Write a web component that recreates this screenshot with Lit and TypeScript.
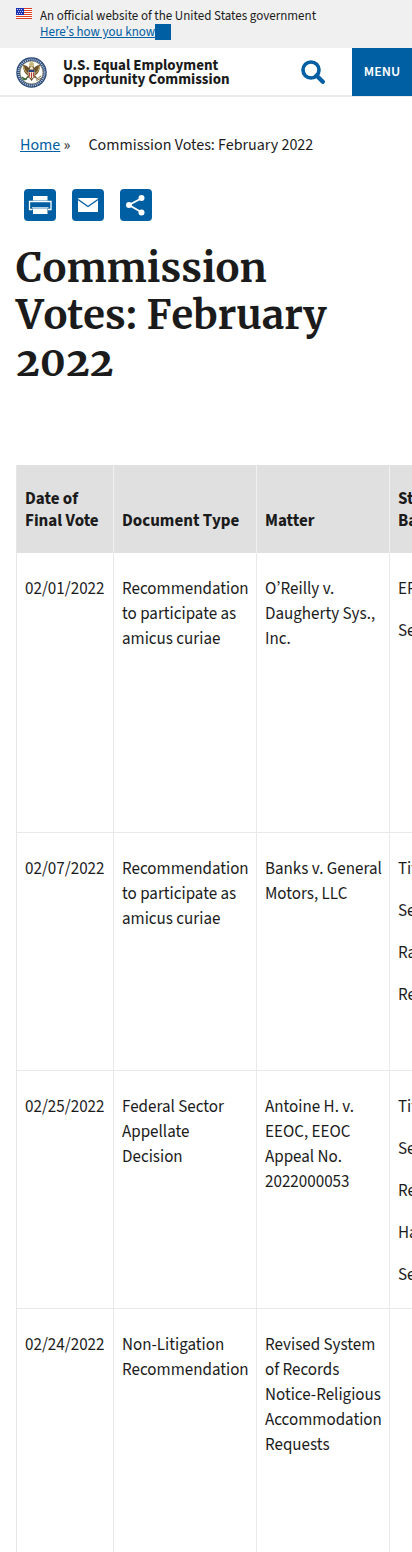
import { LitElement, html, css, svg } from "lit";
import { customElement } from "lit/decorators.js";

interface Vote {
  date: string;
  type: string;
  matter: string;
  bases: string[];
  size: string;
}

const votes: Vote[] = [
  {
    date: "02/01/2022",
    type: "Recommendation to participate as amicus curiae",
    matter: "O’Reilly v. Daugherty Sys., Inc.",
    bases: ["EPA", "Sex"],
    size: "tall",
  },
  {
    date: "02/07/2022",
    type: "Recommendation to participate as amicus curiae",
    matter: "Banks v. General Motors, LLC",
    bases: ["Title VII", "Sex", "Race", "Retaliation"],
    size: "medium",
  },
  {
    date: "02/25/2022",
    type: "Federal Sector Appellate Decision",
    matter: "Antoine H. v. EEOC, EEOC Appeal No. 2022000053",
    bases: ["Title VII", "Sex", "Retaliation", "Harassment", "Section 501"],
    size: "medium",
  },
  {
    date: "02/24/2022",
    type: "Non-Litigation Recommendation",
    matter: "Revised System of Records Notice-Religious Accommodation Requests",
    bases: [],
    size: "last",
  },
];

@customElement("site-banner")
export class SiteBanner extends LitElement {
  static styles = css`
    :host {
      display: block;
      background: #f0f0f0;
    }
    .banner {
      display: flex;
      gap: 8px;
      padding: 8px 16px;
      font-size: 13px;
      line-height: 16px;
    }
    .flag {
      flex: none;
      width: 16px;
      height: 11px;
    }
    .text {
      margin: 0;
    }
    .know {
      display: flex;
      align-items: center;
      padding: 0;
      border: 0;
      background: none;
      color: #005ea2;
      font: inherit;
      text-decoration: underline;
    }
    .marker {
      width: 16px;
      height: 16px;
      background: #005ea2;
    }
  `;

  render() {
    return html`
      <section class="banner" aria-label="Official website">
        <svg class="flag" viewBox="0 0 16 11" aria-hidden="true">
          <rect width="16" height="11" fill="#fff" />
          ${[0, 2, 4, 6, 8, 10].map(
            (y) => svg`<rect y=${y} width="16" height="1" fill="#db3e1f" />`,
          )}
          <rect width="8" height="7" fill="#1e33b1" />
          ${[1, 3, 5].map((y) =>
            [1, 3, 5].map(
              (x) =>
                svg`<rect x=${x + (y === 3 ? 1 : 0)} y=${y} width="1" height="1" fill="#c5cbf0" />`,
            ),
          )}
        </svg>
        <div>
          <p class="text">An official website of the United States government</p>
          <button class="know" type="button">Here’s how you know<span class="marker"></span></button>
        </div>
      </section>
    `;
  }
}

@customElement("site-header")
export class SiteHeader extends LitElement {
  static styles = css`
    :host {
      display: block;
    }
    .bar {
      display: flex;
      align-items: stretch;
      box-sizing: border-box;
      height: 49px;
      padding-left: 16px;
      box-shadow: inset 0 -2px 0 #ebebeb;
    }
    .brand {
      display: flex;
      flex: 1;
      align-items: center;
      gap: 16px;
      color: #1b1b1b;
      font-size: 15px;
      font-weight: 700;
      line-height: 14px;
      text-decoration: none;
    }
    .seal {
      flex: none;
      width: 31px;
      height: 31px;
    }
    .search,
    .menu {
      display: grid;
      place-items: center;
      height: 48px;
      padding: 0;
      border: 0;
      font: inherit;
    }
    .search {
      width: 78px;
      background: none;
      color: #005ea2;
    }
    .glass {
      width: 24px;
      height: 24px;
    }
    .menu {
      width: 60px;
      background: #005ea2;
      color: #fff;
      font-size: 14px;
      font-weight: 600;
    }
  `;

  render() {
    return html`
      <header class="bar">
        <a class="brand" href="#">
          <svg class="seal" viewBox="0 0 62 62" aria-hidden="true">
            <circle cx="31" cy="31" r="30.5" fill="#2a4a78" />
            <circle cx="31" cy="31" r="26" fill="none" stroke="#b9c6d8" stroke-width="4" stroke-dasharray="2 2" />
            <circle cx="31" cy="31" r="22.5" fill="#fff" stroke="#a9985c" />
            <path d="M31 16c-3 0-5 2-5 6-2-3-6-6-12-6 0 10 3 17 10 21l-6 7 8-3 5 7 5-7 8 3-6-7c7-4 10-11 10-21-6 0-10 3-12 6 0-4-2-6-5-6z" fill="#6b5127" />
            <path d="M15 18c1 7 4 12 9 15M47 18c-1 7-4 12-9 15" fill="none" stroke="#d2b777" stroke-width="2" />
            <circle cx="31" cy="15" r="5" fill="#c9b878" />
            <path d="M29 20h4l2 5h-8z" fill="#efe9d8" />
            <path d="M25 26h12v9c0 5-3 7-6 8-3-1-6-3-6-8z" fill="#f3e9df" />
            <path d="M25 26h12v4H25z" fill="#28417a" />
            <path d="M27 31v8M31 31v11M35 31v8" stroke="#b33a2c" stroke-width="2" />
            <path d="M12 40c3 4 6 5 10 3M14 44c3 2 5 2 8-1" fill="none" stroke="#40683a" stroke-width="3" />
            <path d="M50 38l-10 7M51 42l-10 5" stroke="#867447" stroke-width="2" />
          </svg>
          <span>U.S. Equal Employment<br />Opportunity Commission</span>
        </a>
        <button class="search" type="button" aria-label="Search">
          <svg class="glass" viewBox="0 0 24 24" aria-hidden="true">
            <circle cx="10" cy="10" r="8" fill="none" stroke="currentColor" stroke-width="3.6" />
            <path d="M15.5 15.5l6.3 6.3" stroke="currentColor" stroke-width="4.2" stroke-linecap="round" />
          </svg>
        </button>
        <button class="menu" type="button">MENU</button>
      </header>
    `;
  }
}

@customElement("page-tools")
export class PageTools extends LitElement {
  static styles = css`
    :host {
      display: block;
    }
    .tools {
      display: flex;
      gap: 16px;
      padding: 0 8px;
    }
    .tool {
      display: block;
      width: 32px;
      height: 32px;
      border-radius: 4px;
      background: #005ea2;
    }
    .icon {
      display: block;
      width: 32px;
      height: 32px;
    }
  `;

  render() {
    return html`
      <nav class="tools" aria-label="Share this page">
        <a class="tool" href="#" aria-label="Print">
          <svg class="icon" viewBox="0 0 32 32" aria-hidden="true">
            <path d="M9 7h14.5v4.500H9zM9 19.500h14.500v5.500H9z" fill="#fff" />
            <path d="M8.500 20.500H5.500v-8h21.500v8h-3" fill="none" stroke="#fff" stroke-width="1.300" />
            <path d="M8 18.800h16.500" stroke="#fff" />
          </svg>
        </a>
        <a class="tool" href="#" aria-label="Email">
          <svg class="icon" viewBox="0 0 32 32" aria-hidden="true">
            <rect x="6" y="9" width="20" height="14" rx=".6" fill="#fff" />
            <path d="M6 10.5l10 7 10-7" fill="none" stroke="#005ea2" stroke-width="1.3" />
          </svg>
        </a>
        <a class="tool" href="#" aria-label="Share">
          <svg class="icon" viewBox="0 0 32 32" aria-hidden="true">
            <path d="M22 9L9 16l13 7.5" fill="none" stroke="#fff" stroke-width="1.8" />
            <g fill="#fff">
              <circle cx="21.5" cy="9" r="3" />
              <circle cx="9" cy="16" r="3" />
              <circle cx="21.5" cy="23.5" r="3" />
            </g>
          </svg>
        </a>
      </nav>
    `;
  }
}

@customElement("votes-table")
export class VotesTable extends LitElement {
  static styles = css`
    :host {
      display: block;
      overflow: hidden;
    }
    .table {
      width: 520px;
      table-layout: fixed;
      border-collapse: separate;
      border-spacing: 0;
      border-left: 1px solid #e6e6e6;
      font-size: 17px;
      line-height: 25px;
    }
    .date {
      width: 97px;
    }
    .type {
      width: 143px;
    }
    .matter {
      width: 133px;
    }
    .head,
    .cell {
      box-sizing: border-box;
      padding: 7px 8px 0;
      text-align: left;
    }
    .head {
      height: 88px;
      padding-bottom: 21px;
      border-right: 1px solid #f0f0f0;
      background: #e0e0e0;
      font-weight: 700;
      line-height: 22px;
      vertical-align: bottom;
    }
    .cell {
      padding-right: 7px;
      border-right: 1px solid #e9e9e9;
      border-bottom: 1px solid #e9e9e9;
      vertical-align: top;
    }
    .row:last-child .cell {
      border-bottom: 0;
    }
    .tall {
      height: 280px;
    }
    .medium {
      height: 238px;
    }
    .last {
      height: 243px;
    }
    .para {
      margin: 17px 0;
    }
    .para:last-child {
      margin-bottom: 0;
    }
  `;

  render() {
    return html`
      <table class="table">
        <colgroup>
          <col class="date" />
          <col class="type" />
          <col class="matter" />
          <col />
        </colgroup>
        <thead>
          <tr>
            <th class="head" scope="col">Date of Final Vote</th>
            <th class="head" scope="col">Document Type</th>
            <th class="head" scope="col">Matter</th>
            <th class="head" scope="col">Statute/<br />Basis</th>
          </tr>
        </thead>
        <tbody>
          ${votes.map(
            (vote) => html`
              <tr class="row ${vote.size}">
                <td class="cell"><p class="para">${vote.date}</p></td>
                <td class="cell"><p class="para">${vote.type}</p></td>
                <td class="cell"><p class="para">${vote.matter}</p></td>
                <td class="cell">${vote.bases.map((basis) => html`<p class="para">${basis}</p>`)}</td>
              </tr>
            `,
          )}
        </tbody>
      </table>
    `;
  }
}

@customElement("app-root")
export class AppRoot extends LitElement {
  static styles = css`
    :host {
      display: block;
      overflow: hidden;
      background: #fff;
      color: #1b1b1b;
      font-family: "Source Sans Pro", "Source Sans 3", "Noto Sans CJK KR", "Open Sans", sans-serif;
      font-size: 16px;
    }
    .main {
      padding-left: 16px;
    }
    .crumbs {
      display: flex;
      gap: 18px;
      margin: 0;
      padding: 36px 4px 32px;
      list-style: none;
      line-height: 24px;
    }
    .link {
      color: #005ea2;
    }
    .title {
      margin: 24px 32px 79px 0;
      font-family: Merriweather, "DejaVu Serif", serif;
      font-size: 40px;
      font-weight: 700;
      font-kerning: none;
      font-variant-numeric: oldstyle-nums;
      line-height: 47px;
    }
  `;

  render() {
    return html`
      <site-banner></site-banner>
      <site-header></site-header>
      <main class="main">
        <nav aria-label="Breadcrumb">
          <ol class="crumbs">
            <li><a class="link" href="#">Home</a> »</li>
            <li>Commission Votes: February 2022</li>
          </ol>
        </nav>
        <page-tools></page-tools>
        <h1 class="title">Commission Votes: February 2022</h1>
        <votes-table></votes-table>
      </main>
    `;
  }
}
